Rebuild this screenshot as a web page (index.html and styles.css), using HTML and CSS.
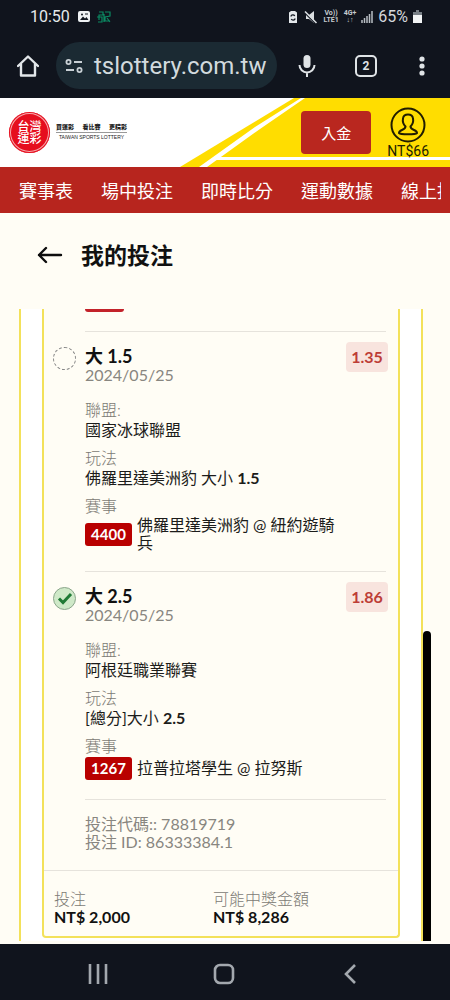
FILE: index.html
```html
<!DOCTYPE html>
<html lang="zh-Hant">
<head>
<meta charset="utf-8">
<meta name="viewport" content="width=device-width, initial-scale=1">
<title>我的投注</title>
<link rel="stylesheet" href="styles.css">
</head>
<body>
<div class="app">
  <div class="status">
    <span class="clock">10:50</span>
    <svg class="status-left" width="34" height="14" viewBox="0 0 34 14">
      <rect x="0" y="1" width="12" height="11" rx="2" fill="#eef1f3"/>
      <path d="M2 10l3-3.500 2 2 1.500-1.500L10.500 10z" fill="#10161f"/><circle cx="4" cy="4.500" r="1" fill="#10161f"/><path d="M7 4h3" stroke="#10161f"/>
      <path d="M21 2h4v3h-4v5M19 7h5v5h-4M27 2h5v4l-5 1v4h5M26 4v8M29 8l3 4" fill="none" stroke="#0b8a63" stroke-width="1.200"/>
    </svg>
    <span class="spacer"></span>
    <svg width="30" height="14" viewBox="0 0 30 14">
      <path d="M3 1h4l2 1.500V13H1V2.500z" fill="#e4e8eb"/><path d="M2.800 6.500a2.200 2.200 0 0 1 4-.5M7.200 8.500a2.200 2.200 0 0 1-4 .5" fill="none" stroke="#10161f" stroke-width="1.200"/>
      <path d="M18 5h3l5-4v12l-5-4h-3z" fill="#d9dde0"/><path d="M17 3l11 11" stroke="#10161f" stroke-width="1.500"/><path d="M17 1.500l11.500 11.500" stroke="#d9dde0" stroke-width="1.600"/>
    </svg>
    <span class="net"><span>Vo))</span><span>LTE1</span></span>
    <span class="net"><span>4G+</span><span>↓↑</span></span>
    <svg width="12" height="12" viewBox="0 0 12 12"><path d="M1 12V9M3.500 12V7M6 12V5M8.500 12V3M11 12V0" stroke="#b8bec4" stroke-width="1.500"/></svg>
    <span class="percent">65%</span>
    <svg width="9" height="13" viewBox="0 0 9 13"><path d="M3 0h3v2h3v11H0V2h3z" fill="#777e85"/><path d="M0 5h9v8H0z" fill="#f2f4f5"/></svg>
  </div>

  <div class="browser">
    <button class="icon-btn" aria-label="主頁">
      <svg width="22" height="22" viewBox="0 0 22 22"><path d="M1 11L11 1.500 21 11M4 9v11.500h14V9" fill="none" stroke="#e2e6e9" stroke-width="2.400" stroke-linejoin="round" stroke-linecap="round"/></svg>
    </button>
    <div class="address">
      <svg width="18" height="14" viewBox="0 0 18 14" fill="none" stroke="#c8d0d5" stroke-width="1.800"><circle cx="3.500" cy="3" r="2.100"/><path d="M9 3h8M1 11h8"/><circle cx="14.500" cy="11" r="2.100"/></svg>
      <span>tslottery.com.tw</span>
    </div>
    <button class="icon-btn mic" aria-label="語音">
      <svg width="18" height="24" viewBox="0 0 18 24"><rect x="5.500" y="1" width="7" height="13" rx="3.500" fill="#dfe3e6"/><path d="M1.500 11a7.500 7.500 0 0 0 15 0M9 18.500V23" fill="none" stroke="#dfe3e6" stroke-width="2"/></svg>
    </button>
    <button class="icon-btn tabs" aria-label="分頁">2</button>
    <button class="icon-btn" aria-label="選單">
      <svg width="6" height="20" viewBox="0 0 6 20" fill="#dfe3e6"><circle cx="3" cy="3" r="2.600"/><circle cx="3" cy="10" r="2.600"/><circle cx="3" cy="17" r="2.600"/></svg>
    </button>
  </div>

  <header class="site">
    <svg class="art" width="270" height="69" viewBox="0 0 270 69">
      <path d="M0 69L114 0H270V69z" fill="#fd0"/>
      <path d="M19 69L75 29 121 0h4L80 31 27 69z" fill="#fff"/>
      <path d="M36 60.500H270" stroke="#fff" stroke-width="3"/>
    </svg>
    <a class="logo" href="#" aria-label="台灣運彩">
      <span class="seal"><span class="seal-text">台灣運彩</span></span>
      <span class="words"><span class="slogan"><span>買運彩</span><span>看比賽</span><span>更精彩</span></span><span class="latin">TAIWAN SPORTS LOTTERY</span></span>
    </a>
    <button class="deposit">入金</button>
    <a class="account" href="#">
      <svg width="36" height="36" viewBox="0 0 36 36" fill="none" stroke="#211d00" stroke-width="2"><circle cx="18" cy="18" r="16.500"/><path d="M15.500 19.500C13 17 12.500 14 13 11.500c.6-5.500 9.400-5.500 10 0 .5 2.500 0 5.500-2.500 8 0 2 1 2.500 3.500 3.500 2 .8 3 1.500 3 3-1.500 1.800-16.500 1.800-18 0 0-1.500 1-2.200 3-3 2.500-1 3.500-1.500 3.500-3.500z"/></svg>
      <span>NT$66</span>
    </a>
  </header>

  <nav class="menu">
    <div class="menu-track">
      <a href="#">賽事表</a><a href="#">場中投注</a><a href="#">即時比分</a><a href="#">運動數據</a><a href="#">線上投注</a>
    </div>
  </nav>

  <div class="title">
    <button class="back" aria-label="返回"><svg width="26" height="18" viewBox="0 0 26 18"><path d="M9 2L2 9l7 7M2 9h22" fill="none" stroke="#0d0d0d" stroke-width="2.400" stroke-linecap="round" stroke-linejoin="round"/></svg></button>
    <h1>我的投注</h1>
  </div>

  <main class="pane">
    <div class="panel">
      <section class="card">
        <div class="legs">
          <div class="tail"></div>
          <article class="leg">
            <span class="mark open"></span>
            <div class="head"><div><h2>大 1.5</h2><time>2024/05/25</time></div><span class="odds">1.35</span></div>
            <dl>
              <div><dt>聯盟:</dt><dd>國家冰球聯盟</dd></div>
              <div><dt>玩法</dt><dd>佛羅里達美洲豹 大小 <b>1.5</b></dd></div>
              <div><dt>賽事</dt><dd class="match"><span class="code">4400</span><span class="teams">佛羅里達美洲豹 @ 紐約遊騎兵</span></dd></div>
            </dl>
          </article>
          <article class="leg">
            <span class="mark won"><svg width="16" height="13" viewBox="0 0 16 13"><path d="M2 6.500l4 4L14 2" fill="none" stroke="#207a35" stroke-width="3"/></svg></span>
            <div class="head"><div><h2>大 2.5</h2><time>2024/05/25</time></div><span class="odds">1.86</span></div>
            <dl>
              <div><dt>聯盟:</dt><dd>阿根廷職業聯賽</dd></div>
              <div><dt>玩法</dt><dd>[總分]大小 <b>2.5</b></dd></div>
              <div><dt>賽事</dt><dd class="match"><span class="code">1267</span><span class="teams">拉普拉塔學生 @ 拉努斯</span></dd></div>
            </dl>
          </article>
          <div class="ids"><div>投注代碼:: 78819719</div><div>投注 ID: 86333384.1</div></div>
        </div>
        <footer class="totals">
          <div><div class="muted">投注</div><strong>NT$ 2,000</strong></div>
          <div><div class="muted">可能中獎金額</div><strong>NT$ 8,286</strong></div>
        </footer>
      </section>
    </div>
    <div class="thumb"></div>
  </main>

  <div class="system">
    <button aria-label="最近"><svg width="20" height="20" viewBox="0 0 20 20"><path d="M2 0v20M10 0v20M18 0v20" stroke="#a3a8ae" stroke-width="2.600"/></svg></button>
    <button aria-label="首頁"><svg width="22" height="22" viewBox="0 0 22 22"><rect x="2" y="2" width="18" height="18" rx="5" fill="none" stroke="#a3a8ae" stroke-width="2.600"/></svg></button>
    <button aria-label="上一頁"><svg width="12" height="20" viewBox="0 0 12 20"><path d="M11 1L2 10l9 9" fill="none" stroke="#a3a8ae" stroke-width="2.600"/></svg></button>
  </div>
</div>
</body>
</html>
```
FILE: styles.css
```css
* { box-sizing: border-box; margin: 0; padding: 0; }
body { background: #fffdf5; color: #1c1c1a; font: 16px/20px Lato, "Noto Sans CJK TC", sans-serif; }
button { border: 0; background: none; color: inherit; font: inherit; }
a { color: inherit; text-decoration: none; }
svg { display: block; flex: none; }
.app { min-height: 100vh; display: flex; flex-direction: column; overflow: hidden; }
.spacer { flex: 1; }

.status { height: 33px; background: #10141d; color: #e6e9ec; display: flex; align-items: center; padding: 0 28px 0 30px; font: 16px/20px Roboto, sans-serif; gap: 5px; }
.status-left { margin-left: 3px; }
.net { display: flex; flex-direction: column; align-items: center; font-size: 7px; line-height: 7px; font-weight: 700; color: #c5cace; }
.percent { color: #d4d8dc; }

.browser { height: 65px; background: #10141d; display: flex; align-items: center; padding: 0 25px 0 17px; }
.icon-btn { flex: none; display: flex; align-items: center; justify-content: center; }
.address { flex: 1; min-width: 0; height: 47px; margin-left: 17px; border-radius: 24px; background: #1b2a33; color: #d2dade; display: flex; align-items: center; gap: 11px; padding: 0 9px; font: 24px/30px Roboto, sans-serif; white-space: nowrap; }
.mic { margin: 0 39px 0 21px; }
.tabs { width: 22px; height: 22px; margin-right: 42px; border: 2px solid #dfe3e6; border-radius: 5px; color: #dfe3e6; font: 700 12px/16px Roboto, sans-serif; }

.site { position: relative; height: 69px; background: #fff; display: flex; align-items: center; padding: 0 21px 0 9px; }
.art { position: absolute; right: 0; top: 0; }
.logo { position: relative; display: flex; align-items: center; gap: 6px; margin-right: auto; }
.seal { width: 41px; height: 41px; border-radius: 50%; background: #e60e1e; box-shadow: inset 0 0 0 1px #e60e1e, inset 0 0 0 2px #f6a9ac; color: #fff; display: flex; align-items: center; justify-content: center; }
.seal-text { width: 24px; font-size: 12px; line-height: 12px; font-weight: 500; word-break: break-all; }
.words { width: 71px; display: flex; flex-direction: column; align-items: stretch; color: #222; padding-bottom: 3px; }
.slogan { display: flex; justify-content: space-between; border-bottom: 1px solid #999; font-size: 6px; line-height: 10px; font-weight: 900; }
.latin { font: 5px/8px "Liberation Sans", sans-serif; text-align: center; white-space: nowrap; }
.deposit { position: relative; width: 70px; height: 43px; border-radius: 4px; background: #b9271f; color: #fff; font-size: 15px; margin-right: 16px; }
.account { position: relative; display: flex; flex-direction: column; align-items: center; font: 14px/16px Roboto, sans-serif; color: #211d00; }

.menu { height: 46px; background: #b7251e; color: #fff; padding: 0 9px 0 19px; }
.menu-track { display: flex; gap: 28px; overflow: hidden; font-size: 18px; line-height: 48px; white-space: nowrap; }

.title { display: flex; align-items: center; gap: 18px; height: 96px; padding: 0 37px 12px; }
.title h1 { font-size: 23px; line-height: 30px; font-weight: 700; color: #111; }

.pane { position: relative; flex: 1; display: flex; margin-bottom: 3px; padding: 0 27px 0 19px; }
.panel { flex: 1; padding: 0 21px; border: solid #f3e15a; border-width: 0 2px; background: #fff; }
.card { border: 2px solid #f3e15a; border-top: 0; border-radius: 0 0 4px 4px; background: #fffdf5; }
.legs { padding: 0 12px 0 41px; }
.tail { width: 39px; height: 3px; border-radius: 0 0 3px 3px; background: #c3222a; margin-bottom: 19px; }
.leg { position: relative; border-top: 1px solid #e6e3dc; padding: 15px 0 19px; }
.mark { position: absolute; left: -32px; top: 15px; width: 23px; height: 23px; border-radius: 50%; display: flex; align-items: center; justify-content: center; }
.open { border: 1px dashed #888; }
.won { border: 1px solid #8aa58a; background: #cfe9c8; }
.head { display: flex; justify-content: space-between; align-items: flex-start; margin-bottom: 16px; }
h2 { font-size: 18px; line-height: 19px; font-weight: 700; color: #111; }
time { display: block; line-height: 18px; color: #888680; }
.odds { width: 42px; margin: -5px -2px 0 0; border-radius: 4px; background: #f8e4de; color: #bd3d36; font-size: 16px; line-height: 30px; font-weight: 700; text-align: center; }
dl { display: flex; flex-direction: column; gap: 8px; }
dt, .muted { color: #7c7a74; font-weight: 300; }
.match { display: flex; align-items: center; gap: 5px; min-height: 24px; line-height: 18px; }
.code { flex: none; width: 47px; border-radius: 3px; background: #b90000; color: #fff; font-size: 15px; font-weight: 700; line-height: 23px; text-align: center; }
.teams { max-width: 200px; }
.ids { border-top: 1px solid #e6e3dc; padding: 15px 0 19px; color: #888680; line-height: 18px; }
.totals { display: grid; grid-template-columns: 1fr 1fr; border-top: 1px solid #e6e3dc; padding: 19px 26px 10px 10px; line-height: 18px; }
.totals strong { display: block; font-weight: 700; color: #111; }
.thumb { position: absolute; right: 19px; top: 51%; bottom: 0; width: 8px; border-radius: 4px 4px 0 0; background: #000; }

.system { height: 56px; background: #10141d; display: grid; grid-template-columns: repeat(3, 1fr); padding: 3px 37px 0 35px; align-items: center; }
.system button { display: flex; justify-content: center; }
```
